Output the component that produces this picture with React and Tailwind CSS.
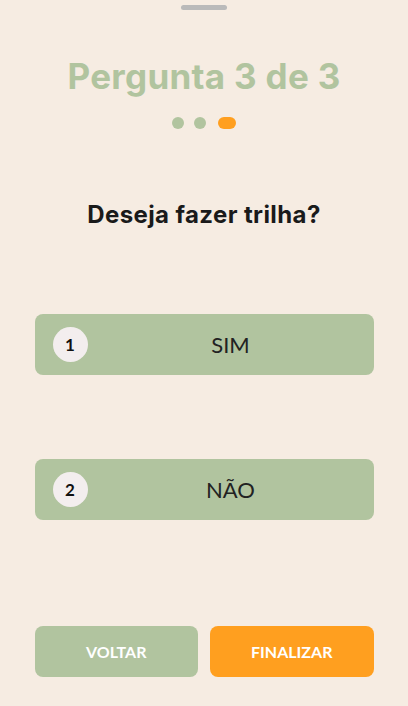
import React from "react";

const options = [
  { n: 1, label: "SIM" },
  { n: 2, label: "NÃO" },
];

export default function App() {
  return (
    <div
      className="w-[408px] h-[706px] bg-[#f6ece2] flex flex-col items-center overflow-hidden"
      style={{ fontFamily: "'Lato', 'Liberation Sans', sans-serif" }}
    >
      <div className="mt-[5px] w-[46px] h-[5px] rounded-full bg-[#bababa]" />

      <h1
        className="mt-[44px] text-[35px] leading-[44px] font-bold tracking-[0.3px] text-[#b1c49f]"
        style={{ fontFamily: "'Inter', 'Liberation Sans', sans-serif" }}
      >
        Pergunta 3 de 3
      </h1>

      <div className="mt-[19px] flex items-center gap-[10px]">
        <span className="w-[12px] h-[12px] rounded-full bg-[#b1c49f]" />
        <span className="w-[12px] h-[12px] rounded-full bg-[#b1c49f]" />
        <span className="ml-[2px] w-[18px] h-[12px] rounded-full bg-[#ff9f1f]" />
      </div>

      <h2
        className="mt-[70px] text-[24px] leading-[32px] font-bold tracking-[0.4px] text-[#1a1a1a]"
        style={{ fontFamily: "'Inter', 'Liberation Sans', sans-serif" }}
      >
        Deseja fazer trilha?
      </h2>

      <div className="mt-[83px] w-[339px] flex flex-col gap-[84px]">
        {options.map((o) => (
          <button
            key={o.n}
            className="h-[61px] w-full rounded-[8px] bg-[#b1c49f] flex items-center pl-[18px]"
          >
            <span className="w-[35px] h-[35px] rounded-full bg-[#f3eeee] flex items-center justify-center text-[17px] font-bold text-[#111]">
              {o.n}
            </span>
            <span className="flex-1 text-center text-[22px] text-[#222]">
              {o.label}
            </span>
          </button>
        ))}
      </div>

      <div className="mt-auto mb-[29px] w-[339px] flex gap-[12px]">
        <button className="flex-1 h-[51px] rounded-[8px] bg-[#b1c49f] text-white text-[16px] font-bold">
          VOLTAR
        </button>
        <button className="flex-1 h-[51px] rounded-[8px] bg-[#ff9f1f] text-white text-[16px] font-bold">
          FINALIZAR
        </button>
      </div>
    </div>
  );
}
